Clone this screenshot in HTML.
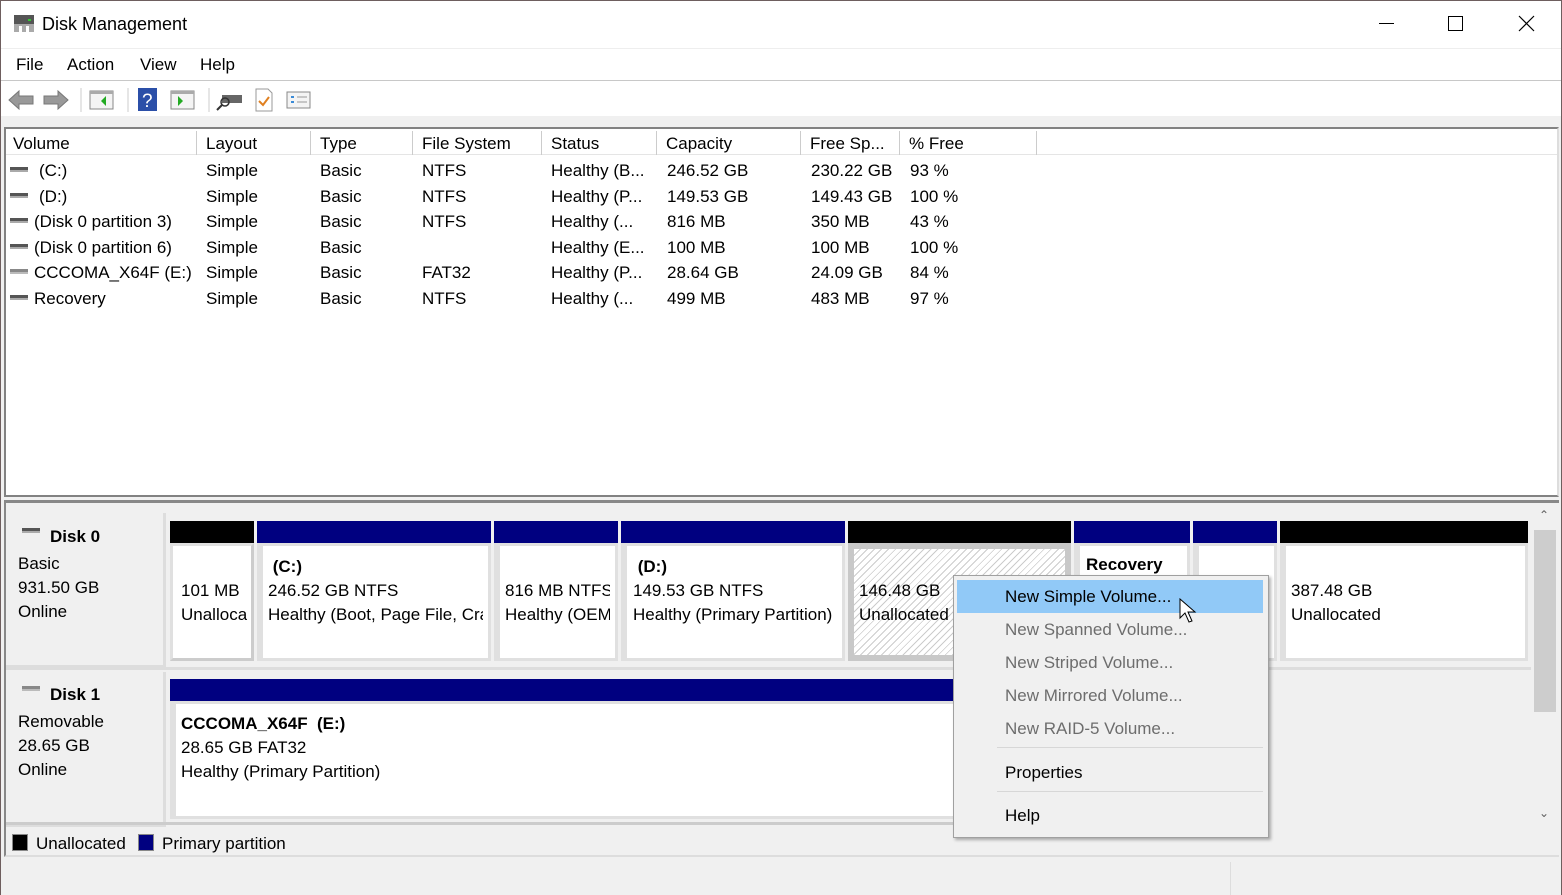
<!DOCTYPE html>
<html><head><meta charset="utf-8"><style>
*{box-sizing:border-box;margin:0;padding:0}
body{width:1562px;height:895px;overflow:hidden;background:#f0f0f0;font-family:"Liberation Sans",sans-serif;font-size:17px;color:#000;position:relative}
.a{position:absolute;white-space:nowrap}
.t{line-height:20px}
</style></head><body>
<div class="a" style="left:0;top:0;width:1562px;height:895px;border:1px solid #6e5e5e;border-bottom:none"></div>
<div class="a" style="left:1px;top:1px;width:1560px;height:47px;background:#fff"></div>
<svg class="a" style="left:13px;top:14px" width="22" height="20"><rect x="1" y="1" width="20" height="9" fill="#555"/><rect x="15" y="5" width="3" height="2" fill="#3c3"/><rect x="1" y="10" width="20" height="8" fill="#aaa"/><rect x="6" y="12" width="3" height="6" fill="#fff"/><rect x="13" y="12" width="3" height="6" fill="#fff"/></svg>
<div class="a t" style="left:42px;top:14px;font-size:18px">Disk Management</div>
<div class="a" style="left:1379px;top:23px;width:15px;height:1px;background:#000"></div>
<div class="a" style="left:1448px;top:16px;width:15px;height:15px;border:1px solid #000"></div>
<svg class="a" style="left:1518px;top:15px" width="17" height="17"><path d="M1 1L16 16M16 1L1 16" stroke="#000" stroke-width="1.2"/></svg>
<div class="a" style="left:1px;top:48px;width:1560px;height:33px;background:#fff;border-top:1px solid #eee;border-bottom:1px solid #c8c8c8"></div>
<div class="a t" style="left:16px;top:55px">File</div>
<div class="a t" style="left:67px;top:55px">Action</div>
<div class="a t" style="left:140px;top:55px">View</div>
<div class="a t" style="left:200px;top:55px">Help</div>
<div class="a" style="left:1px;top:81px;width:1560px;height:35px;background:#fff"></div>
<svg class="a" style="left:6px;top:86px" width="310" height="28">
<path d="M3 14L13 5V10H27V18H13V23Z" fill="#999" stroke="#777"/>
<path d="M62 14L52 5V10H38V18H52V23Z" fill="#999" stroke="#777"/>
<line x1="75" y1="2" x2="75" y2="26" stroke="#ccc"/>
<rect x="84" y="5" width="23" height="18" fill="#f4f4f4" stroke="#888"/><rect x="84" y="5" width="23" height="3" fill="#aaa"/><path d="M100 10L95 15L100 20Z" fill="#2a2"/>
<line x1="122" y1="2" x2="122" y2="26" stroke="#ccc"/>
<rect x="132" y="2" width="19" height="23" fill="#2b4fa8"/><text x="136" y="21" fill="#fff" font-size="19" font-family="Liberation Sans">?</text>
<rect x="165" y="5" width="23" height="18" fill="#f4f4f4" stroke="#888"/><rect x="165" y="5" width="23" height="3" fill="#aaa"/><path d="M172 10L177 15L172 20Z" fill="#2a2"/>
<line x1="203" y1="2" x2="203" y2="26" stroke="#ccc"/>
<rect x="216" y="9" width="20" height="8" fill="#666"/><circle cx="219" cy="16" r="4" fill="none" stroke="#333" stroke-width="1.5"/><path d="M216 19L211 24" stroke="#333" stroke-width="2"/>
<path d="M250 3H262L266 7V25H250Z" fill="#fff" stroke="#999"/><path d="M253 15L257 19L263 11" stroke="#e08020" stroke-width="2" fill="none"/>
<rect x="281" y="6" width="23" height="16" fill="#f4f4f4" stroke="#888"/><path d="M285 11h3M285 16h3" stroke="#3a8ad6" stroke-width="2"/><path d="M291 11h10M291 16h10" stroke="#999"/>
</svg>
<div class="a" style="left:4px;top:127px;width:1555px;height:370px;background:#fff;border:2px solid #828282;border-right-color:#ddd"></div>
<div class="a" style="left:6px;top:129px;width:1551px;height:26px;background:#fff;border-bottom:1px solid #e5e5e5"></div>
<div class="a t" style="left:13px;top:134px">Volume</div>
<div class="a t" style="left:206px;top:134px">Layout</div>
<div class="a t" style="left:320px;top:134px">Type</div>
<div class="a t" style="left:422px;top:134px">File System</div>
<div class="a t" style="left:551px;top:134px">Status</div>
<div class="a t" style="left:666px;top:134px">Capacity</div>
<div class="a t" style="left:810px;top:134px">Free Sp...</div>
<div class="a t" style="left:909px;top:134px">% Free</div>
<div class="a" style="left:196px;top:131px;width:1px;height:24px;background:#ccc"></div>
<div class="a" style="left:310px;top:131px;width:1px;height:24px;background:#ccc"></div>
<div class="a" style="left:412px;top:131px;width:1px;height:24px;background:#ccc"></div>
<div class="a" style="left:541px;top:131px;width:1px;height:24px;background:#ccc"></div>
<div class="a" style="left:656px;top:131px;width:1px;height:24px;background:#ccc"></div>
<div class="a" style="left:800px;top:131px;width:1px;height:24px;background:#ccc"></div>
<div class="a" style="left:899px;top:131px;width:1px;height:24px;background:#ccc"></div>
<div class="a" style="left:1036px;top:131px;width:1px;height:24px;background:#ccc"></div>
<div style="position:absolute;left:0;top:161px">
<div style="position:relative;height:25.5px"><div class="a" style="left:10px;top:6px;width:18px;height:5px;background:#555;border-bottom:2px solid #aaa"></div><span class="a t" style="left:39px">(C:)</span><span class="a t" style="left:206px">Simple</span><span class="a t" style="left:320px">Basic</span><span class="a t" style="left:422px">NTFS</span><span class="a t" style="left:551px">Healthy (B...</span><span class="a t" style="left:667px">246.52 GB</span><span class="a t" style="left:811px">230.22 GB</span><span class="a t" style="left:910px">93 %</span></div>
<div style="position:relative;height:25.5px"><div class="a" style="left:10px;top:6px;width:18px;height:5px;background:#555;border-bottom:2px solid #aaa"></div><span class="a t" style="left:39px">(D:)</span><span class="a t" style="left:206px">Simple</span><span class="a t" style="left:320px">Basic</span><span class="a t" style="left:422px">NTFS</span><span class="a t" style="left:551px">Healthy (P...</span><span class="a t" style="left:667px">149.53 GB</span><span class="a t" style="left:811px">149.43 GB</span><span class="a t" style="left:910px">100 %</span></div>
<div style="position:relative;height:25.5px"><div class="a" style="left:10px;top:6px;width:18px;height:5px;background:#555;border-bottom:2px solid #aaa"></div><span class="a t" style="left:34px">(Disk 0 partition 3)</span><span class="a t" style="left:206px">Simple</span><span class="a t" style="left:320px">Basic</span><span class="a t" style="left:422px">NTFS</span><span class="a t" style="left:551px">Healthy (...</span><span class="a t" style="left:667px">816 MB</span><span class="a t" style="left:811px">350 MB</span><span class="a t" style="left:910px">43 %</span></div>
<div style="position:relative;height:25.5px"><div class="a" style="left:10px;top:6px;width:18px;height:5px;background:#555;border-bottom:2px solid #aaa"></div><span class="a t" style="left:34px">(Disk 0 partition 6)</span><span class="a t" style="left:206px">Simple</span><span class="a t" style="left:320px">Basic</span><span class="a t" style="left:551px">Healthy (E...</span><span class="a t" style="left:667px">100 MB</span><span class="a t" style="left:811px">100 MB</span><span class="a t" style="left:910px">100 %</span></div>
<div style="position:relative;height:25.5px"><div class="a" style="left:10px;top:6px;width:18px;height:5px;background:#888;border-bottom:2px solid #bbb"></div><span class="a t" style="left:34px">CCCOMA_X64F (E:)</span><span class="a t" style="left:206px">Simple</span><span class="a t" style="left:320px">Basic</span><span class="a t" style="left:422px">FAT32</span><span class="a t" style="left:551px">Healthy (P...</span><span class="a t" style="left:667px">28.64 GB</span><span class="a t" style="left:811px">24.09 GB</span><span class="a t" style="left:910px">84 %</span></div>
<div style="position:relative;height:25.5px"><div class="a" style="left:10px;top:6px;width:18px;height:5px;background:#555;border-bottom:2px solid #aaa"></div><span class="a t" style="left:34px">Recovery</span><span class="a t" style="left:206px">Simple</span><span class="a t" style="left:320px">Basic</span><span class="a t" style="left:422px">NTFS</span><span class="a t" style="left:551px">Healthy (...</span><span class="a t" style="left:667px">499 MB</span><span class="a t" style="left:811px">483 MB</span><span class="a t" style="left:910px">97 %</span></div>
</div>
<div class="a" style="left:4px;top:500px;width:1555px;height:3px;background:#888"></div>
<div class="a" style="left:4px;top:503px;width:1555px;height:327px;background:#f0f0f0;border-left:2px solid #888"></div>
<div class="a" style="left:6px;top:513px;width:160px;height:155px;border-right:3px solid #ddd;border-bottom:3px solid #ddd"></div>
<div class="a" style="left:22px;top:528px;width:18px;height:5px;background:#555;border-bottom:2px solid #aaa"></div>
<div class="a t" style="left:50px;top:527px;font-weight:bold">Disk 0</div>
<div class="a t" style="left:18px;top:552px;line-height:24px">Basic<br>931.50 GB<br>Online</div>
<div class="a" style="left:6px;top:667px;width:1525px;height:3px;background:#ddd"></div>
<div class="a" style="left:6px;top:672px;width:160px;height:155px;border-right:3px solid #ddd;border-bottom:3px solid #ddd"></div>
<div class="a" style="left:22px;top:686px;width:18px;height:5px;background:#888;border-bottom:2px solid #bbb"></div>
<div class="a t" style="left:50px;top:685px;font-weight:bold">Disk 1</div>
<div class="a t" style="left:18px;top:710px;line-height:24px">Removable<br>28.65 GB<br>Online</div>
<div class="a" style="left:6px;top:822px;width:1000px;height:3px;background:#ccc"></div>
<div class="a" style="left:170px;top:521px;width:84px;height:22px;background:#000"></div>
<div class="a" style="left:170px;top:543px;width:84px;height:118px;background:#fff;border:3px solid #e0e0e0;border-right-color:#ccc;border-bottom-color:#ccc"></div>
<div class="a t" style="left:181px;top:579px;width:66px;overflow:hidden;line-height:24px">101 MB<br>Unallocated</div>
<div class="a" style="left:257px;top:521px;width:234px;height:22px;background:#000080"></div>
<div class="a" style="left:257px;top:543px;width:234px;height:118px;background:#fff;border:3px solid #e0e0e0;border-left-width:6px"></div>
<div class="a t" style="left:268px;top:555px;width:215px;overflow:hidden;line-height:24px"><b>&nbsp;(C:)</b><br>246.52 GB NTFS<br>Healthy (Boot, Page File, Crash Dump)</div>
<div class="a" style="left:494px;top:521px;width:124px;height:22px;background:#000080"></div>
<div class="a" style="left:494px;top:543px;width:124px;height:118px;background:#fff;border:3px solid #e0e0e0;border-left-width:6px"></div>
<div class="a t" style="left:505px;top:579px;width:105px;overflow:hidden;line-height:24px">816 MB NTFS<br>Healthy (OEM Partition)</div>
<div class="a" style="left:621px;top:521px;width:224px;height:22px;background:#000080"></div>
<div class="a" style="left:621px;top:543px;width:224px;height:118px;background:#fff;border:3px solid #e0e0e0;border-left-width:6px"></div>
<div class="a t" style="left:633px;top:555px;width:205px;overflow:hidden;line-height:24px"><b>&nbsp;(D:)</b><br>149.53 GB NTFS<br>Healthy (Primary Partition)</div>
<div class="a" style="left:848px;top:521px;width:223px;height:22px;background:#000"></div>
<div class="a" style="left:848px;top:543px;width:223px;height:118px;border:6px solid #c8c8c8;background:repeating-linear-gradient(135deg,#fff 0 4px,#ccc 4px 5px)"></div>
<div class="a t" style="left:859px;top:579px;line-height:24px">146.48 GB<br>Unallocated</div>
<div class="a" style="left:1074px;top:521px;width:116px;height:22px;background:#000080"></div>
<div class="a" style="left:1074px;top:543px;width:116px;height:118px;background:#fff;border:3px solid #e0e0e0;border-left-width:6px"></div>
<div class="a t" style="left:1086px;top:555px;font-weight:bold">Recovery</div>
<div class="a" style="left:1193px;top:521px;width:84px;height:22px;background:#000080"></div>
<div class="a" style="left:1193px;top:543px;width:84px;height:118px;background:#fff;border:3px solid #e0e0e0;border-left-width:6px"></div>
<div class="a" style="left:1280px;top:521px;width:248px;height:22px;background:#000"></div>
<div class="a" style="left:1280px;top:543px;width:248px;height:118px;background:#fff;border:3px solid #e0e0e0;border-left-width:6px"></div>
<div class="a t" style="left:1291px;top:579px;line-height:24px">387.48 GB<br>Unallocated</div>
<div class="a" style="left:170px;top:679px;width:830px;height:22px;background:#000080"></div>
<div class="a" style="left:170px;top:701px;width:830px;height:118px;background:#fff;border:3px solid #e0e0e0;border-left-width:6px"></div>
<div class="a t" style="left:181px;top:712px;line-height:24px"><b>CCCOMA_X64F&nbsp; (E:)</b><br>28.65 GB FAT32<br>Healthy (Primary Partition)</div>
<div class="a" style="left:1532px;top:508px;width:26px;height:320px;background:#f0f0f0"></div>
<div class="a" style="left:1534px;top:530px;width:22px;height:182px;background:#cdcdcd"></div>
<div class="a" style="left:1539px;top:508px;font-size:12px;color:#606060">&#8963;</div>
<div class="a" style="left:1539px;top:806px;font-size:12px;color:#606060">&#8964;</div>
<div class="a" style="left:4px;top:830px;width:1555px;height:27px;background:#f0f0f0;border-bottom:2px solid #ddd;border-left:2px solid #888"></div>
<div class="a" style="left:12px;top:834px;width:16px;height:17px;background:#000;border:1px solid #888"></div>
<div class="a t" style="left:36px;top:834px">Unallocated</div>
<div class="a" style="left:138px;top:834px;width:16px;height:17px;background:#000080;border:1px solid #888"></div>
<div class="a t" style="left:162px;top:834px">Primary partition</div>
<div class="a" style="left:1230px;top:862px;width:1px;height:33px;background:#ddd"></div>
<div class="a" style="left:953px;top:575px;width:316px;height:263px;background:#f0f0f0;border:1px solid #a0a0a0;box-shadow:2px 2px 3px rgba(0,0,0,.3)"></div>
<div class="a" style="left:957px;top:580px;width:306px;height:33px;background:#91c9f7"></div>
<div class="a t" style="left:1005px;top:587px">New Simple Volume...</div>
<div class="a t" style="left:1005px;top:620px;color:#6d6d6d">New Spanned Volume...</div>
<div class="a t" style="left:1005px;top:653px;color:#6d6d6d">New Striped Volume...</div>
<div class="a t" style="left:1005px;top:686px;color:#6d6d6d">New Mirrored Volume...</div>
<div class="a t" style="left:1005px;top:719px;color:#6d6d6d">New RAID-5 Volume...</div>
<div class="a" style="left:997px;top:747px;width:266px;height:1px;background:#d7d7d7"></div>
<div class="a t" style="left:1005px;top:763px">Properties</div>
<div class="a" style="left:997px;top:791px;width:266px;height:1px;background:#d7d7d7"></div>
<div class="a t" style="left:1005px;top:806px">Help</div>
<svg class="a" style="left:1179px;top:598px" width="20" height="28"><path d="M1 1V20L6 15L10 24L13 23L9 14H16Z" fill="#fff" stroke="#000" stroke-width="1"/></svg>
</body></html>
